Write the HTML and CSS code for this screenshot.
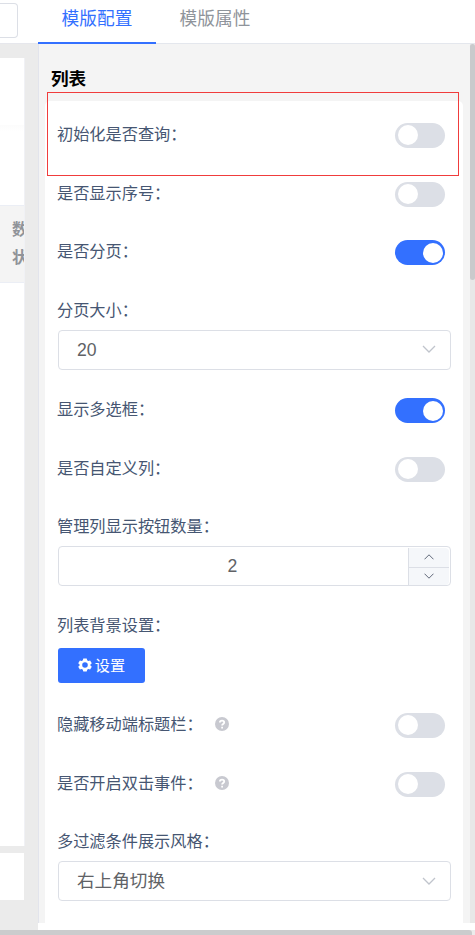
FILE: index.html
```html
<!DOCTYPE html>
<html lang="zh-CN">
<head>
<meta charset="utf-8">
<title>模版配置</title>
<link rel="stylesheet" href="styles.css">
</head>
<body>
<div class="app">
  <aside class="preview">
    <div class="preview-top"><div class="preview-input"></div></div>
    <div class="preview-table">
      <div class="preview-search"></div>
      <div class="preview-head">数<br>状</div>
    </div>
    <div class="preview-footer"></div>
  </aside>
  <main class="settings">
    <nav class="tabs">
      <div class="tab active">模版配置</div>
      <div class="tab">模版属性</div>
    </nav>
    <div class="scroll">
      <div class="panel">
        <h2>列表</h2>
        <div class="card">
          <div class="row"><span class="label">初始化是否查询：</span><span class="switch"></span></div>
          <div class="row"><span class="label">是否显示序号：</span><span class="switch"></span></div>
          <div class="row"><span class="label">是否分页：</span><span class="switch on"></span></div>
          <div class="row stacked first"><span class="label">分页大小：</span>
            <div class="field"><span class="value digits">20</span><svg class="chevron" viewBox="0 0 14 9"><path d="M1 1l6 6 6-6"/></svg></div>
          </div>
          <div class="row"><span class="label">显示多选框：</span><span class="switch on"></span></div>
          <div class="row"><span class="label">是否自定义列：</span><span class="switch"></span></div>
          <div class="row stacked"><span class="label">管理列显示按钮数量：</span>
            <div class="field number"><span class="amount">2</span>
              <div class="steps">
                <span class="step"><svg viewBox="0 0 10 6"><path d="M.5 5.3L5 .8l4.500 4.500"/></svg></span>
                <span class="step"><svg viewBox="0 0 10 6"><path d="M.5.700L5 5.200 9.500.700"/></svg></span>
              </div>
            </div>
          </div>
          <div class="row stacked"><span class="label">列表背景设置：</span>
            <button class="button"><svg class="gear" viewBox="0 0 14 14"><path fill-rule="evenodd" d="M5.300.4h3.400l.5 1.900 1 .6 1.900-.5 1.700 2.900L12.400 6.400v1.200l1.400 1.100-1.700 2.900-1.900-.5-1 .6-.5 1.900H5.300l-.5-1.900-1-.6-1.900.5L.2 8.700l1.400-1.100V6.400L.2 5.300l1.700-2.900 1.900.5 1-.6zM7 4.200a2.800 2.800 0 1 0 0 5.600 2.800 2.800 0 0 0 0-5.600z"/></svg><span class="button-text">设置</span></button>
          </div>
          <div class="row"><span class="label with-help">隐藏移动端标题栏：</span><svg class="help" viewBox="0 0 14 14"><circle cx="7" cy="7" r="7"/><path d="M4.900 5.500c0-2.600 4.300-2.500 4.300-.1 0 1.600-2.100 1.500-2.100 3.100"/><path d="M7.100 9.700v1.700"/></svg><span class="switch"></span></div>
          <div class="row"><span class="label with-help">是否开启双击事件：</span><svg class="help" viewBox="0 0 14 14"><circle cx="7" cy="7" r="7"/><path d="M4.900 5.500c0-2.600 4.300-2.500 4.300-.1 0 1.600-2.100 1.500-2.100 3.100"/><path d="M7.100 9.700v1.700"/></svg><span class="switch"></span></div>
          <div class="row stacked"><span class="label">多过滤条件展示风格：</span>
            <div class="field"><span class="value">右上角切换</span><svg class="chevron" viewBox="0 0 14 9"><path d="M1 1l6 6 6-6"/></svg></div>
          </div>
        </div>
      </div>
      <div class="track"><div class="thumb"></div></div>
    </div>
  </main>
  <div class="highlight"></div>
</div>
<div class="hbar"><div class="hthumb"></div></div>
</body>
</html>
```

FILE: styles.css
```css
* { box-sizing: border-box; }
body {
  margin: 0;
  height: 935px;
  overflow: hidden;
  background: #fff;
  font-family: "Liberation Sans", "Noto Sans CJK SC", sans-serif;
}
.app { position: relative; display: flex; height: 930px; }
.preview { width: 38px; flex: none; background: #ebebeb; overflow: hidden; }
.preview-top { height: 44px; padding-top: 3px; background: #fff; border-bottom: 1px solid #e6e7ec; }
.preview-input { width: 18px; height: 35px; border: 1px solid #dcdfe6; border-left: 0; border-radius: 0 4px 4px 0; }
.preview-table { width: 25px; height: 788px; margin-top: 14px; background: #fff; overflow: hidden; border-right: 1px solid #f0f1f5; }
.preview-search { height: 147px; background: linear-gradient(#fff 67px, #fcfcfc 67px, #fff 73px); }
.preview-head {
  height: 78px;
  padding: 10px 0 0 12px;
  border: solid #ebeef5;
  border-width: 1px 0;
  background: #f4f4f4;
  color: #909399;
  font-size: 16px;
  font-weight: 700;
  line-height: 28px;
}
.preview-footer { width: 24px; height: 47px; margin-top: 7px; background: #fff; }
.settings { width: 437px; height: 930px; background: #fff; }
.tabs { display: flex; height: 44px; border-bottom: 1px solid #e4e7ed; }
.tab { width: 118px; height: 44px; text-align: center; font-size: 17.7px; line-height: 38px; color: #8f949b; }
.tab.active { color: #3370ff; border-bottom: 2px solid #3370ff; }
.scroll { display: flex; height: 879px; background: #f4f4f4; border-left: 1px solid #e2e4ec; overflow: hidden; }
.panel { width: 431px; padding-left: 6px; }
h2 { margin: 0; height: 57px; padding: 22px 0 0 6px; font-size: 17.6px; line-height: 26px; color: #000; }
.card { width: 418px; height: 850px; padding: 4.25px 12px 0 13px; background: #fff; border-radius: 5px; }
.row { display: flex; height: 58.5px; padding-top: 18px; }
.label { height: 23px; margin-left: -1px; font-size: 16.2px; line-height: 23px; color: #465672; white-space: nowrap; }
.with-help { width: 158px; }
.switch { width: 50px; height: 25px; margin: 0 6px 0 auto; padding: 2px 3px; border-radius: 13px; background: #dcdfe6; display: flex; }
.switch::after { content: ""; width: 20px; height: 20px; border-radius: 50%; background: #fff; }
.switch.on { background: #3370ff; justify-content: flex-end; padding: 3px 2px; }
.stacked { display: block; height: 99px; }
.stacked .label { display: block; }
.first { height: 99.25px; }
.field { display: flex; align-items: center; height: 40px; margin-top: 8px; border: 1px solid #dcdfe6; border-radius: 4px; color: #606266; font-size: 17.6px; background: #fff; }
.value { padding: 0 0 3px 18px; }
.digits { padding-bottom: 0; padding-top: 1px; }
.chevron { width: 14px; height: 9px; margin: 0 14px 0 auto; fill: none; stroke: #c0c4cc; stroke-width: 1.3; }
.number { padding: 1px; }
.amount { flex: 1; padding-right: 3px; text-align: center; }
.steps { width: 41px; height: 37px; border-left: 1px solid #dcdfe6; background: #f5f7fa; border-radius: 0 4px 4px 0; }
.step { display: flex; height: 16px; align-items: center; justify-content: center; }
.step:first-child { height: 20px; border-bottom: 1px solid #dcdfe6; }
.step svg { width: 10px; height: 6px; fill: none; stroke: #606879; stroke-width: 1; }
.button { display: flex; align-items: center; justify-content: center; gap: 3px; width: 87px; height: 35px; margin: 11px 0 0; padding: 0; border: 0; border-radius: 3px; background: #3370ff; color: #fff; font-family: inherit; font-size: 15.2px; }
.button-text { padding-bottom: 3px; }
.gear { width: 14px; height: 14px; margin-top: -1px; fill: #fff; }
.help { width: 14px; height: 14px; margin-top: 4px; }
.help circle { fill: #c8c9d0; }
.help path { fill: none; stroke: #fff; stroke-width: 1.8; }
.track { width: 5px; background: #e8e8e8; }
.thumb { height: 236px; background: #c9cacc; border-radius: 3px; }
.highlight { position: absolute; left: 47px; top: 92px; width: 412px; height: 84px; border: 1px solid #f03c3c; }
.hbar { height: 5px; background: #ececec; }
.hthumb { width: 472px; height: 5px; background: #cbcccd; border-radius: 0 3px 0 0; }
```
